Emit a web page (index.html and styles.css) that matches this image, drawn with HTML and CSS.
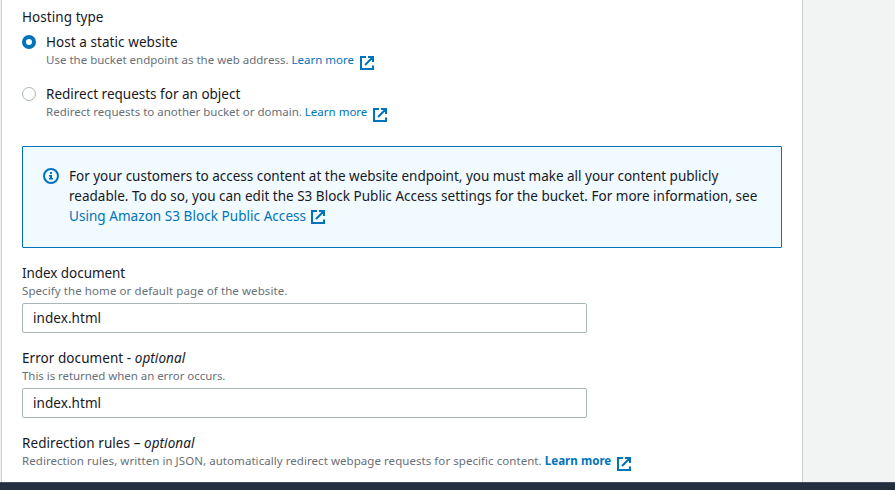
FILE: index.html
```html
<!DOCTYPE html>
<html lang="en">
<head>
<meta charset="utf-8">
<title>Static website hosting</title>
<link rel="stylesheet" href="styles.css">
</head>
<body>
<svg class="defs" width="0" height="0" aria-hidden="true">
  <symbol id="ext" viewBox="0 0 14 14"><path d="M6 1H1v12h12V9.5M8 1h5v5M12.5 1.5 5 9" fill="none" stroke="currentColor" stroke-width="2"/></symbol>
</svg>
<div class="page">
  <main class="panel">
    <section class="hosting">
      <h2 class="label wide">Hosting type</h2>
      <div class="option first">
        <span class="radio checked"></span>
        <div><div class="label wide">Host a static website</div>
        <p class="hint"><span>Use the bucket endpoint as the web address. <a>Learn more</a></span><svg class="ext"><use href="#ext"/></svg></p></div>
      </div>
      <div class="option">
        <span class="radio"></span>
        <div><div class="label">Redirect requests for an object</div>
        <p class="hint"><span>Redirect requests to another bucket or domain. <a>Learn more</a></span><svg class="ext"><use href="#ext"/></svg></p></div>
      </div>
    </section>
    <aside class="info">
      <svg class="info-icon" viewBox="0 0 16 16"><circle cx="8" cy="8" r="7" fill="none" stroke="currentColor" stroke-width="2"/><path d="M7 4h2v2H7zM6 7h3v3h1v1.5H6V10h1V8.5H6z" fill="currentColor"/></svg>
      <div class="info-text">
        <div class="line-first">For your customers to access content at the website endpoint, you must make all your content publicly</div>
        <div class="line-second">readable. To do so, you can edit the S3 Block Public Access settings for the bucket. For more information, see</div>
        <div class="link-row"><a>Using Amazon S3 Block Public Access</a><svg class="ext"><use href="#ext"/></svg></div>
      </div>
    </aside>
    <section class="field">
      <label class="label narrow" for="idx">Index document</label>
      <p class="hint hint-index">Specify the home or default page of the website.</p>
      <input id="idx" value="index.html">
    </section>
    <section class="field">
      <label class="label wide" for="err">Error document - <em>optional</em></label>
      <p class="hint hint-error">This is returned when an error occurs.</p>
      <input id="err" value="index.html">
    </section>
    <section class="field">
      <div class="label wide">Redirection rules – <em>optional</em></div>
      <p class="hint hint-rules"><span>Redirection rules, written in JSON, automatically redirect webpage requests for specific content. <a class="bold">Learn more</a></span><svg class="ext"><use href="#ext"/></svg></p>
    </section>
  </main>
</div>
<footer class="footer"></footer>
</body>
</html>
```
FILE: styles.css
```css
* { box-sizing: border-box; }
body { margin: 0; height: 490px; overflow: hidden; display: flex; flex-direction: column; background: #f2f3f3; color: #16191f; font: 14px/20px "Noto Sans", sans-serif; }
.defs { display: none; }
.page { height: 482px; padding-left: 1px; overflow: hidden; }
.panel { width: 802px; height: 482px; background: #fff; border-left: 1px solid #c8d0d0; border-right: 1px solid #c8d0d0; padding: 7px 20px 0 20px; }
.label { display: block; margin: 0; font-size: 13.5px; font-weight: 400; line-height: 20px; white-space: nowrap; }
.wide { letter-spacing: .06px; }
.narrow { letter-spacing: -.06px; }
.hint { display: flex; gap: 6px; margin: 0; height: 16px; font-size: 11.5px; line-height: 16px; color: #687078; white-space: nowrap; }
.hint-index { letter-spacing: .08px; }
.hint-error { letter-spacing: -.05px; }
.hint-rules { letter-spacing: .055px; }
a { color: #0073bb; }
.bold { font-weight: 700; }
.ext { width: 14px; height: 14px; color: #0073bb; flex: none; margin-top: 4px; }
.option { display: flex; gap: 10px; height: 52px; }
.first { margin-top: 5px; }
.radio { width: 14px; height: 14px; margin-top: 3px; border: 1px solid #aab7b8; border-radius: 50%; background: #fff; }
.radio.checked { border: 4px solid #0073bb; }
.info { display: flex; width: 760px; height: 102px; margin-top: 10px; padding: 19px 20px; background: #f1faff; border: 1px solid #0073bb; border-radius: 1px; }
.info-icon { width: 16px; height: 16px; margin: 2px 10px 0 0; color: #0073bb; flex: none; }
.info-text { font-size: 13.5px; white-space: nowrap; }
.line-first { letter-spacing: -.01px; }
.line-second { letter-spacing: .01px; }
.link-row { display: flex; gap: 5px; letter-spacing: .05px; }
.field { height: 85px; }
.info + .field { margin-top: 15px; }
input { display: block; width: 565px; height: 30px; margin-top: 4px; padding: 0 10px; border: 1px solid #aab7b8; border-radius: 2px; font: 13.5px "Noto Sans", sans-serif; letter-spacing: .06px; color: #16191f; }
.footer { height: 8px; background: #232f3e; border-top: 1px solid #414d5c; }
```
